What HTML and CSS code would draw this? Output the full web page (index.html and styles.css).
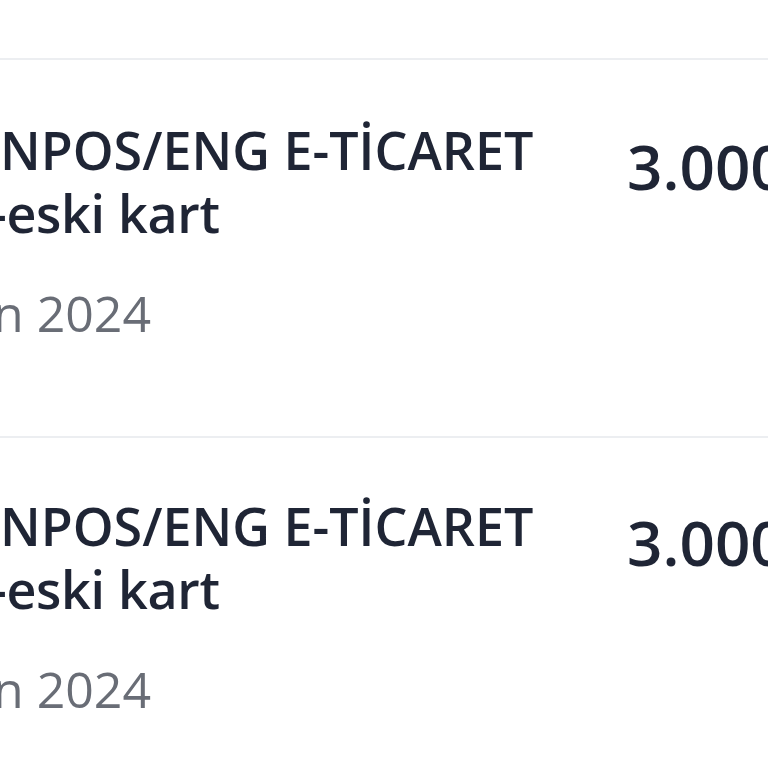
FILE: index.html
```html
<!DOCTYPE html>
<html lang="tr">
<head>
<meta charset="utf-8">
<link rel="stylesheet" href="styles.css">
</head>
<body>
<div class="screen">
  <div class="top-space"></div>
  <ul class="tx-list">
    <li class="tx">
      <div class="tx-info">
        <div class="tx-title">
          <span class="line l1">NPOS/ENG E-TİCARET</span>
          <span class="line l2">-eski kart</span>
        </div>
        <div class="tx-date">n 2024</div>
      </div>
      <div class="tx-amount">3.000,00 TL</div>
    </li>
    <li class="tx">
      <div class="tx-info">
        <div class="tx-title">
          <span class="line l1">NPOS/ENG E-TİCARET</span>
          <span class="line l2">-eski kart</span>
        </div>
        <div class="tx-date">n 2024</div>
      </div>
      <div class="tx-amount">3.000,00 TL</div>
    </li>
  </ul>
</div>
</body>
</html>
```
FILE: styles.css
```css
html, body {
  margin: 0;
  padding: 0;
  background: #ffffff;
  overflow: hidden;
}
.screen {
  width: 768px;
  height: 768px;
  overflow: hidden;
  font-family: "Open Sans", Lato, sans-serif;
}
.top-space {
  height: 58px;
}
.tx-list {
  list-style: none;
  margin: 0;
  padding: 0;
}
.tx {
  display: flex;
  align-items: flex-start;
  border-top: 2px solid #eceef1;
  height: 318px;
  padding-top: 58px;
  box-sizing: content-box;
}
.tx + .tx {
  padding-top: 56px;
}
.tx-info {
  flex: 0 0 627px;
  white-space: nowrap;
}
.tx-title {
  font-size: 52px;
  line-height: 63px;
  font-weight: 600;
  color: #1f2535;
}
.line {
  display: block;
}
.l2 {
  margin-left: -10px;
  letter-spacing: -0.3px;
}
.tx-date {
  margin-top: 38px;
  margin-left: -7px;
  font-size: 50px;
  line-height: 63px;
  font-weight: 400;
  color: #696d76;
}
.tx-amount {
  margin-top: 12px;
  font-size: 62px;
  line-height: 72px;
  font-weight: 600;
  color: #1f2535;
  white-space: nowrap;
}
```
